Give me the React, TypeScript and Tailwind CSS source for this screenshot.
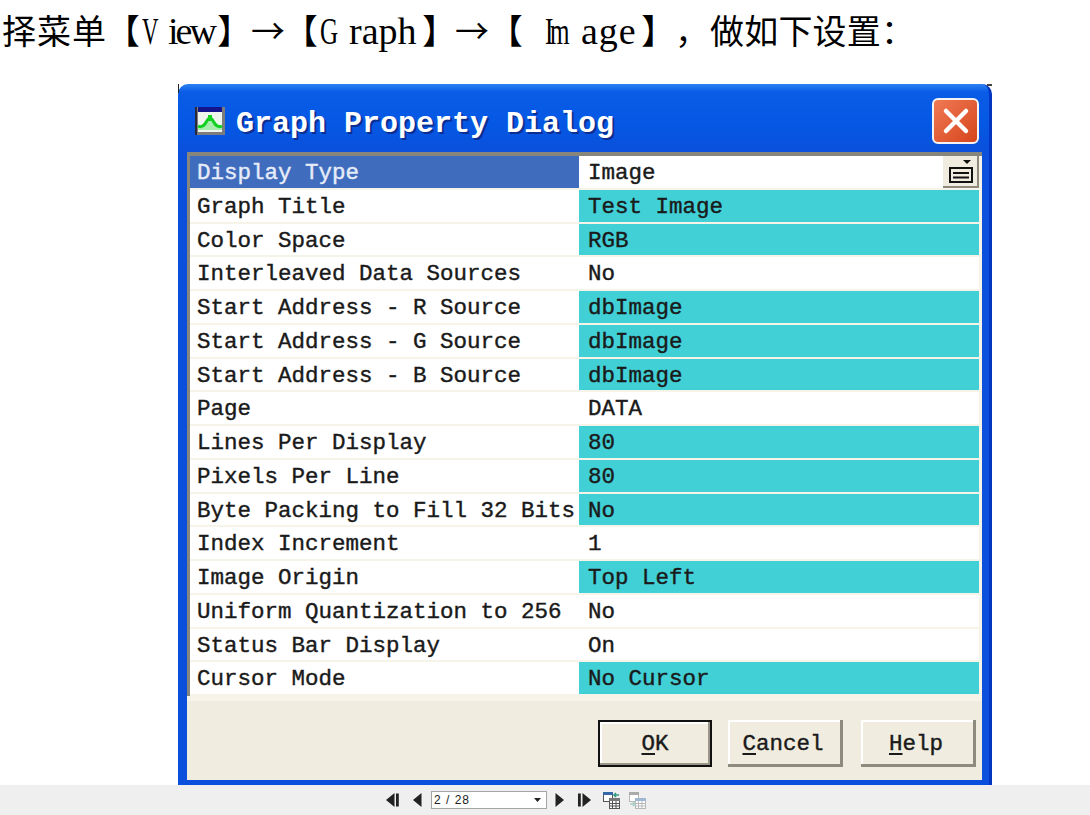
const rows: [string, string, boolean][] = [
  ['Graph Title', 'Test Image', true],
  ['Color Space', 'RGB', true],
  ['Interleaved Data Sources', 'No', false],
  ['Start Address - R Source', 'dbImage', true],
  ['Start Address - G Source', 'dbImage', true],
  ['Start Address - B Source', 'dbImage', true],
  ['Page', 'DATA', false],
  ['Lines Per Display', '80', true],
  ['Pixels Per Line', '80', true],
  ['Byte Packing to Fill 32 Bits', 'No', true],
  ['Index Increment', '1', false],
  ['Image Origin', 'Top Left', true],
  ['Uniform Quantization to 256', 'No', false],
  ['Status Bar Display', 'On', false],
  ['Cursor Mode', 'No Cursor', true],
]

const mono = "font-['Liberation_Mono',monospace] text-[22.5px] leading-none whitespace-pre [-webkit-text-stroke:0.4px_currentColor]"
const bracket = "shrink-0 [font-feature-settings:'palt']"
const arrow = "shrink-0 font-['Noto_Sans_CJK_SC',sans-serif]"

function Row({ label, value, on }: { label: string; value: string; on: boolean }) {
  return (
    <div className="grid grid-cols-[389px_400px] h-[33.75px] border-b-2 border-[#f6f4e8] bg-white text-[#1a1a1a]">
      <div className={`${mono} pl-[7px] pt-[3px] flex items-center`}>{label}</div>
      <div className={`${mono} pl-[9px] pt-[3px] flex items-center ${on ? 'bg-[#41d0d6]' : 'bg-white'}`}>{value}</div>
    </div>
  )
}

function DialogButton({ hot, rest, primary }: { hot: string; rest: string; primary?: boolean }) {
  return (
    <button
      className={`h-[47px] pt-[2px] flex items-center justify-center bg-[#f0ecdf] text-[#1a1a1a] ${
        primary
          ? 'w-[114px] -mr-[2px] border-2 border-[#111] shadow-[inset_-2px_-2px_0_#9a978a,inset_2px_2px_0_#fff]'
          : 'w-[115px] pr-[5px] shadow-[inset_-3px_-3px_0_#8e8b7e,inset_2px_2px_0_#fff]'
      }`}
    >
      <span className={mono}>
        <span className="underline underline-offset-[3px]">{hot}</span>
        {rest}
      </span>
    </button>
  )
}

function GraphIcon() {
  return (
    <svg width="30" height="28" viewBox="0 0 30 28">
      <rect x="0" y="0" width="30" height="28" fill="#7c7c7c" />
      <rect x="0" y="0" width="2" height="28" fill="#2a2a3a" />
      <rect x="3" y="0" width="24" height="5" fill="#14148c" />
      <rect x="3" y="5" width="24" height="20" fill="#eef4ee" />
      <path d="M3 20 Q7 22 10 18 Q12 14 15 9 Q18 14 20 18 Q23 22 27 20 L27 23 L3 23 Z" fill="#a8ecb0" />
      <path d="M3 19 Q7 21 10 17 Q12 13 15 10 Q18 13 20 17 Q23 21 27 19" fill="none" stroke="#10d020" strokeWidth="3" />
      <rect x="13" y="8" width="4" height="6" fill="#10d020" />
    </svg>
  )
}

function NavTriangle({ dir, bar }: { dir: 'left' | 'right'; bar?: boolean }) {
  const w = bar ? 13 : 9
  const pts = dir === 'left' ? '8.5,0 8.5,14 0,7' : bar ? '4.5,0 4.5,14 13,7' : '0.5,0 0.5,14 9,7'
  return (
    <svg width={w} height="14" viewBox={`0 0 ${w} 14`}>
      <polygon points={pts} fill="#222" />
      {bar && <rect x={dir === 'left' ? 10 : 0} y="0.5" width="2.8" height="13" fill="#222" />}
    </svg>
  )
}

function SheetIcon({ dim, flip }: { dim?: boolean; flip?: boolean }) {
  const grid = dim ? '#b8b8b8' : '#555'
  const head = dim ? '#9fb7d0' : '#3468a8'
  const arrowColor = dim ? '#a5d0c4' : '#2e9a80'
  return (
    <svg width="17" height="17" viewBox="0 0 17 17">
      <rect x="0.5" y="0.5" width="9" height="9" fill="#fff" stroke={grid} />
      <rect x="0" y="0" width="10" height="3" fill={flip ? '#aaa' : head} />
      <rect x="6.5" y="6.5" width="10" height="10" fill="#fff" stroke={grid} />
      <rect x="6" y="6" width="11" height="3" fill={flip ? head : '#777'} />
      <path d="M7 11.5h9M9.5 9v8M13 9v8M7 14h9" stroke={grid} strokeWidth="1" />
      <path d={flip ? 'M1 12h5M4 10l2 2-2 2' : 'M16 3h-5M13 1l-2 2 2 2'} stroke={arrowColor} strokeWidth="1.5" fill="none" />
    </svg>
  )
}

export default function App() {
  return (
    <div className="w-[1090px] h-[815px] flex flex-col overflow-hidden bg-white">
      <div className="h-[84px] pl-[2px] pt-[8px] flex items-baseline text-[34px] leading-[44px] text-black whitespace-pre font-['Liberation_Serif','Noto_Sans_CJK_SC',serif]">
        <span className="w-[120px] shrink-0 tracking-[1px]">择菜单</span>
        <span className={`w-[20px] ${bracket}`}>【</span>
        <span className="w-[26px] shrink-0 text-[38px] origin-left scale-x-[0.6]">V</span>
        <span className="w-[50px] shrink-0 text-[38px] tracking-[-3px]">iew</span>
        <span className={`w-[33px] ${bracket}`}>】</span>
        <span className={`w-[49px] ${arrow}`}>→</span>
        <span className={`w-[20px] ${bracket}`}>【</span>
        <span className="w-[29px] shrink-0 text-[38px] origin-left scale-x-[0.66]">G</span>
        <span className="w-[74px] shrink-0 text-[38px]">raph</span>
        <span className={`w-[32px] ${bracket}`}>】</span>
        <span className={`w-[50px] ${arrow}`}>→</span>
        <span className={`w-[40px] ${bracket}`}>【</span>
        <span className="w-[36px] shrink-0 text-[38px] tracking-[-5px] origin-left scale-x-[0.66]">Im</span>
        <span className="w-[61px] shrink-0 text-[38px] tracking-[1px]">age</span>
        <span className={`w-[33px] ${bracket}`}>】</span>
        <span className="w-[35px] shrink-0">，</span>
        <span className="tracking-[0.2px]">做如下设置：</span>
      </div>

      <div className="relative ml-[178px] w-[814px] h-[701px] flex flex-col rounded-t-[10px] bg-[linear-gradient(180deg,#2c82f2_0px,#0a5ce6_8px,#0558e4_40px,#0a50dc_68px)] border-r-[3px] border-[#0236c0]">
        <div className="absolute left-0 top-0 w-[1px] h-[9px] bg-[#222]" />
        <div className="absolute right-[-3px] top-0 w-[5px] h-[2px] bg-[#444]" />

        <div className="h-[68px] shrink-0 flex items-start">
          <div className="ml-[17px] mt-[23px]">
            <GraphIcon />
          </div>
          <div className="ml-[11px] mt-[25px] font-['Liberation_Mono',monospace] font-bold text-[30px] leading-[30px] text-white whitespace-pre [text-shadow:2px_2px_0_#0a2f90]">
            Graph Property Dialog
          </div>
          <div className="ml-auto mr-[10px] mt-[14px] w-[47px] h-[46px] rounded-[6px] border-2 border-[#f3f3f3] bg-[linear-gradient(135deg,#ef7a55,#d6451c)] flex items-center justify-center">
            <svg width="30" height="30" viewBox="0 0 30 30">
              <path d="M5 5 L25 25 M25 5 L5 25" stroke="#fff" strokeWidth="4.5" strokeLinecap="round" />
            </svg>
          </div>
        </div>

        <div className="ml-[9px] mr-[7px] mb-[5px] flex-1 flex flex-col bg-[#f0ecdf]">
          <div className="border-t-[4px] border-l-[3px] border-[#86867c] pr-[3px] bg-[#f6f4e8]">
            <div className="grid grid-cols-[389px_364px_36px] h-[33.75px] border-b-2 border-[#f6f4e8] bg-white text-[#1a1a1a]">
              <div className={`${mono} pl-[7px] pt-[3px] flex items-center bg-[#406cbe] text-[#e6ecf8]`}>Display Type</div>
              <div className={`${mono} pl-[9px] pt-[3px] flex items-center`}>Image</div>
              <div className="flex items-center justify-center bg-[#f0ecdf] shadow-[inset_-2px_-2px_0_#8e8b7e]">
                <svg width="26" height="26" viewBox="0 0 26 26">
                  <path d="M15 1h8l-4 4z" fill="#111" />
                  <rect x="2" y="9" width="22" height="14" fill="#f0ecdf" stroke="#111" strokeWidth="2" />
                  <path d="M5 14h16M5 18.5h16" stroke="#111" strokeWidth="2" />
                </svg>
              </div>
            </div>
            {rows.map(([label, value, on]) => (
              <Row key={label} label={label} value={value} on={on} />
            ))}
          </div>
          <div className="flex-1 flex items-start justify-end gap-[18px] pt-[19px] pr-[6px] border-t-[5px] border-[#f6f4e8]">
            <DialogButton hot="O" rest="K" primary />
            <DialogButton hot="C" rest="ancel" />
            <DialogButton hot="H" rest="elp" />
          </div>
        </div>
      </div>

      <div className="h-[30px] shrink-0 bg-[#efefef] flex items-center pl-[386px]">
        <NavTriangle dir="left" bar />
        <div className="ml-[14px]">
          <NavTriangle dir="left" />
        </div>
        <div className="ml-[9px] w-[116px] h-[18px] bg-white border border-[#a5a5a5] flex items-center justify-between pl-[2px] pr-[5px] text-[12px] tracking-[1px] font-['Liberation_Sans',sans-serif] text-[#222] whitespace-pre">
          <span>2 / 28</span>
          <svg width="7" height="4" viewBox="0 0 7 4">
            <path d="M0 0h7L3.5 4z" fill="#222" />
          </svg>
        </div>
        <div className="ml-[8px]">
          <NavTriangle dir="right" />
        </div>
        <div className="ml-[14px]">
          <NavTriangle dir="right" bar />
        </div>
        <div className="ml-[12px]">
          <SheetIcon />
        </div>
        <div className="ml-[9px]">
          <SheetIcon dim flip />
        </div>
      </div>
    </div>
  )
}
